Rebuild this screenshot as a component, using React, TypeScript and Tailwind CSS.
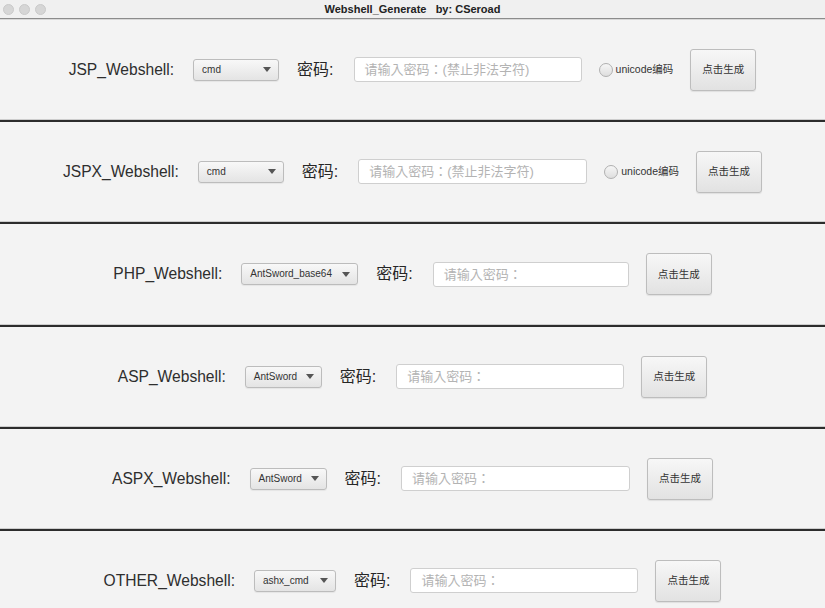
import React from "react";

const latin = "font-['Liberation_Sans','Noto_Sans_CJK_SC',sans-serif]";

type Row = {
  label: string;
  option: string;
  selW: number;
  inputW: number;
  placeholder: string;
  radio: boolean;
  h: string;
};

const rows: Row[] = [
  { label: "JSP_Webshell:", option: "cmd", selW: 86, inputW: 228, placeholder: "请输入密码：(禁止非法字符)", radio: true, h: "h-[99px]" },
  { label: "JSPX_Webshell:", option: "cmd", selW: 86, inputW: 229, placeholder: "请输入密码：(禁止非法字符)", radio: true, h: "h-[99px]" },
  { label: "PHP_Webshell:", option: "AntSword_base64", selW: 117, inputW: 196, placeholder: "请输入密码：", radio: false, h: "h-[100px]" },
  { label: "ASP_Webshell:", option: "AntSword", selW: 77, inputW: 228, placeholder: "请输入密码：", radio: false, h: "h-[99px]" },
  { label: "ASPX_Webshell:", option: "AntSword", selW: 77, inputW: 229, placeholder: "请输入密码：", radio: false, h: "h-[99px]" },
  { label: "OTHER_Webshell:", option: "ashx_cmd", selW: 82, inputW: 228, placeholder: "请输入密码：", radio: false, h: "h-[99px]" },
];

function ShellRow({ r }: { r: Row }) {
  return (
    <div className={`${r.h} flex items-center justify-center`}>
      <span className="text-[15.6px] text-[#2e2e2e] leading-none">{r.label}</span>
      <div
        className="ml-[19px] h-[22px] flex items-center justify-between pl-[8px] pr-[7px] rounded-[3px] border border-[#bcbcbc] bg-gradient-to-b from-[#f8f8f8] to-[#e4e4e4] shadow-[0_1px_1px_rgba(0,0,0,0.06)]"
        style={{ width: r.selW }}
      >
        <span className="text-[10px] text-[#333] leading-none">{r.option}</span>
        <svg width="8" height="5" viewBox="0 0 8 5" className="ml-2">
          <path d="M0 0 L8 0 L4 5 Z" fill="#555" />
        </svg>
      </div>
      <span className="ml-[18px] text-[16px] text-[#262626] leading-none">密码:</span>
      <div
        className="ml-[20px] h-[25px] flex items-center pl-[10px] rounded-[3px] border border-[#cfcfcf] bg-white"
        style={{ width: r.inputW }}
      >
        <span className="text-[13px] text-[#b3b3b3] leading-none whitespace-nowrap font-['Liberation_Sans','Noto_Sans_CJK_TC',sans-serif]">
          {r.placeholder}
        </span>
      </div>
      {r.radio && (
        <div className="ml-[17px] flex items-center">
          <div className="w-[14px] h-[14px] rounded-full border border-[#b0b0b0] bg-gradient-to-b from-[#f6f6f6] to-[#dedede]" />
          <span className="ml-[3px] text-[10.5px] text-[#333] leading-none">unicode编码</span>
        </div>
      )}
      <div className="ml-[17px] w-[66px] h-[42px] flex items-center justify-center rounded-[3px] border border-[#bdbdbd] bg-gradient-to-b from-[#f7f7f7] to-[#e2e2e2] shadow-[0_1px_1px_rgba(0,0,0,0.08)]">
        <span className="text-[10.5px] text-[#333] leading-none">点击生成</span>
      </div>
    </div>
  );
}

export default function App() {
  return (
    <div className={`w-[825px] bg-[#f3f3f3] ${latin}`}>
      <div className="h-[18px] flex items-center relative bg-[#f0f0f0]">
        <div className="flex items-center gap-[5px] pl-[3px]">
          <div className="w-[11px] h-[11px] rounded-full bg-[#d6d6d6] border border-[#cacaca]" />
          <div className="w-[11px] h-[11px] rounded-full bg-[#d6d6d6] border border-[#cacaca]" />
          <div className="w-[11px] h-[11px] rounded-full bg-[#d6d6d6] border border-[#cacaca]" />
        </div>
        <div className="absolute inset-0 flex items-center justify-center">
          <span className="text-[11px] font-bold text-[#222] whitespace-pre">Webshell_Generate   by: CSeroad</span>
        </div>
      </div>
      <div className="h-[1px] bg-[#8c8c8c]" />
      <div className="h-[1px] bg-[#d8d8d8]" />
      {rows.map((r, i) => (
        <div key={i}>
          <ShellRow r={r} />
          <div className="h-[1px] bg-[#cdcdcd]" />
          <div className="h-[2px] bg-[#2c2c2c]" />
        </div>
      ))}
    </div>
  );
}
